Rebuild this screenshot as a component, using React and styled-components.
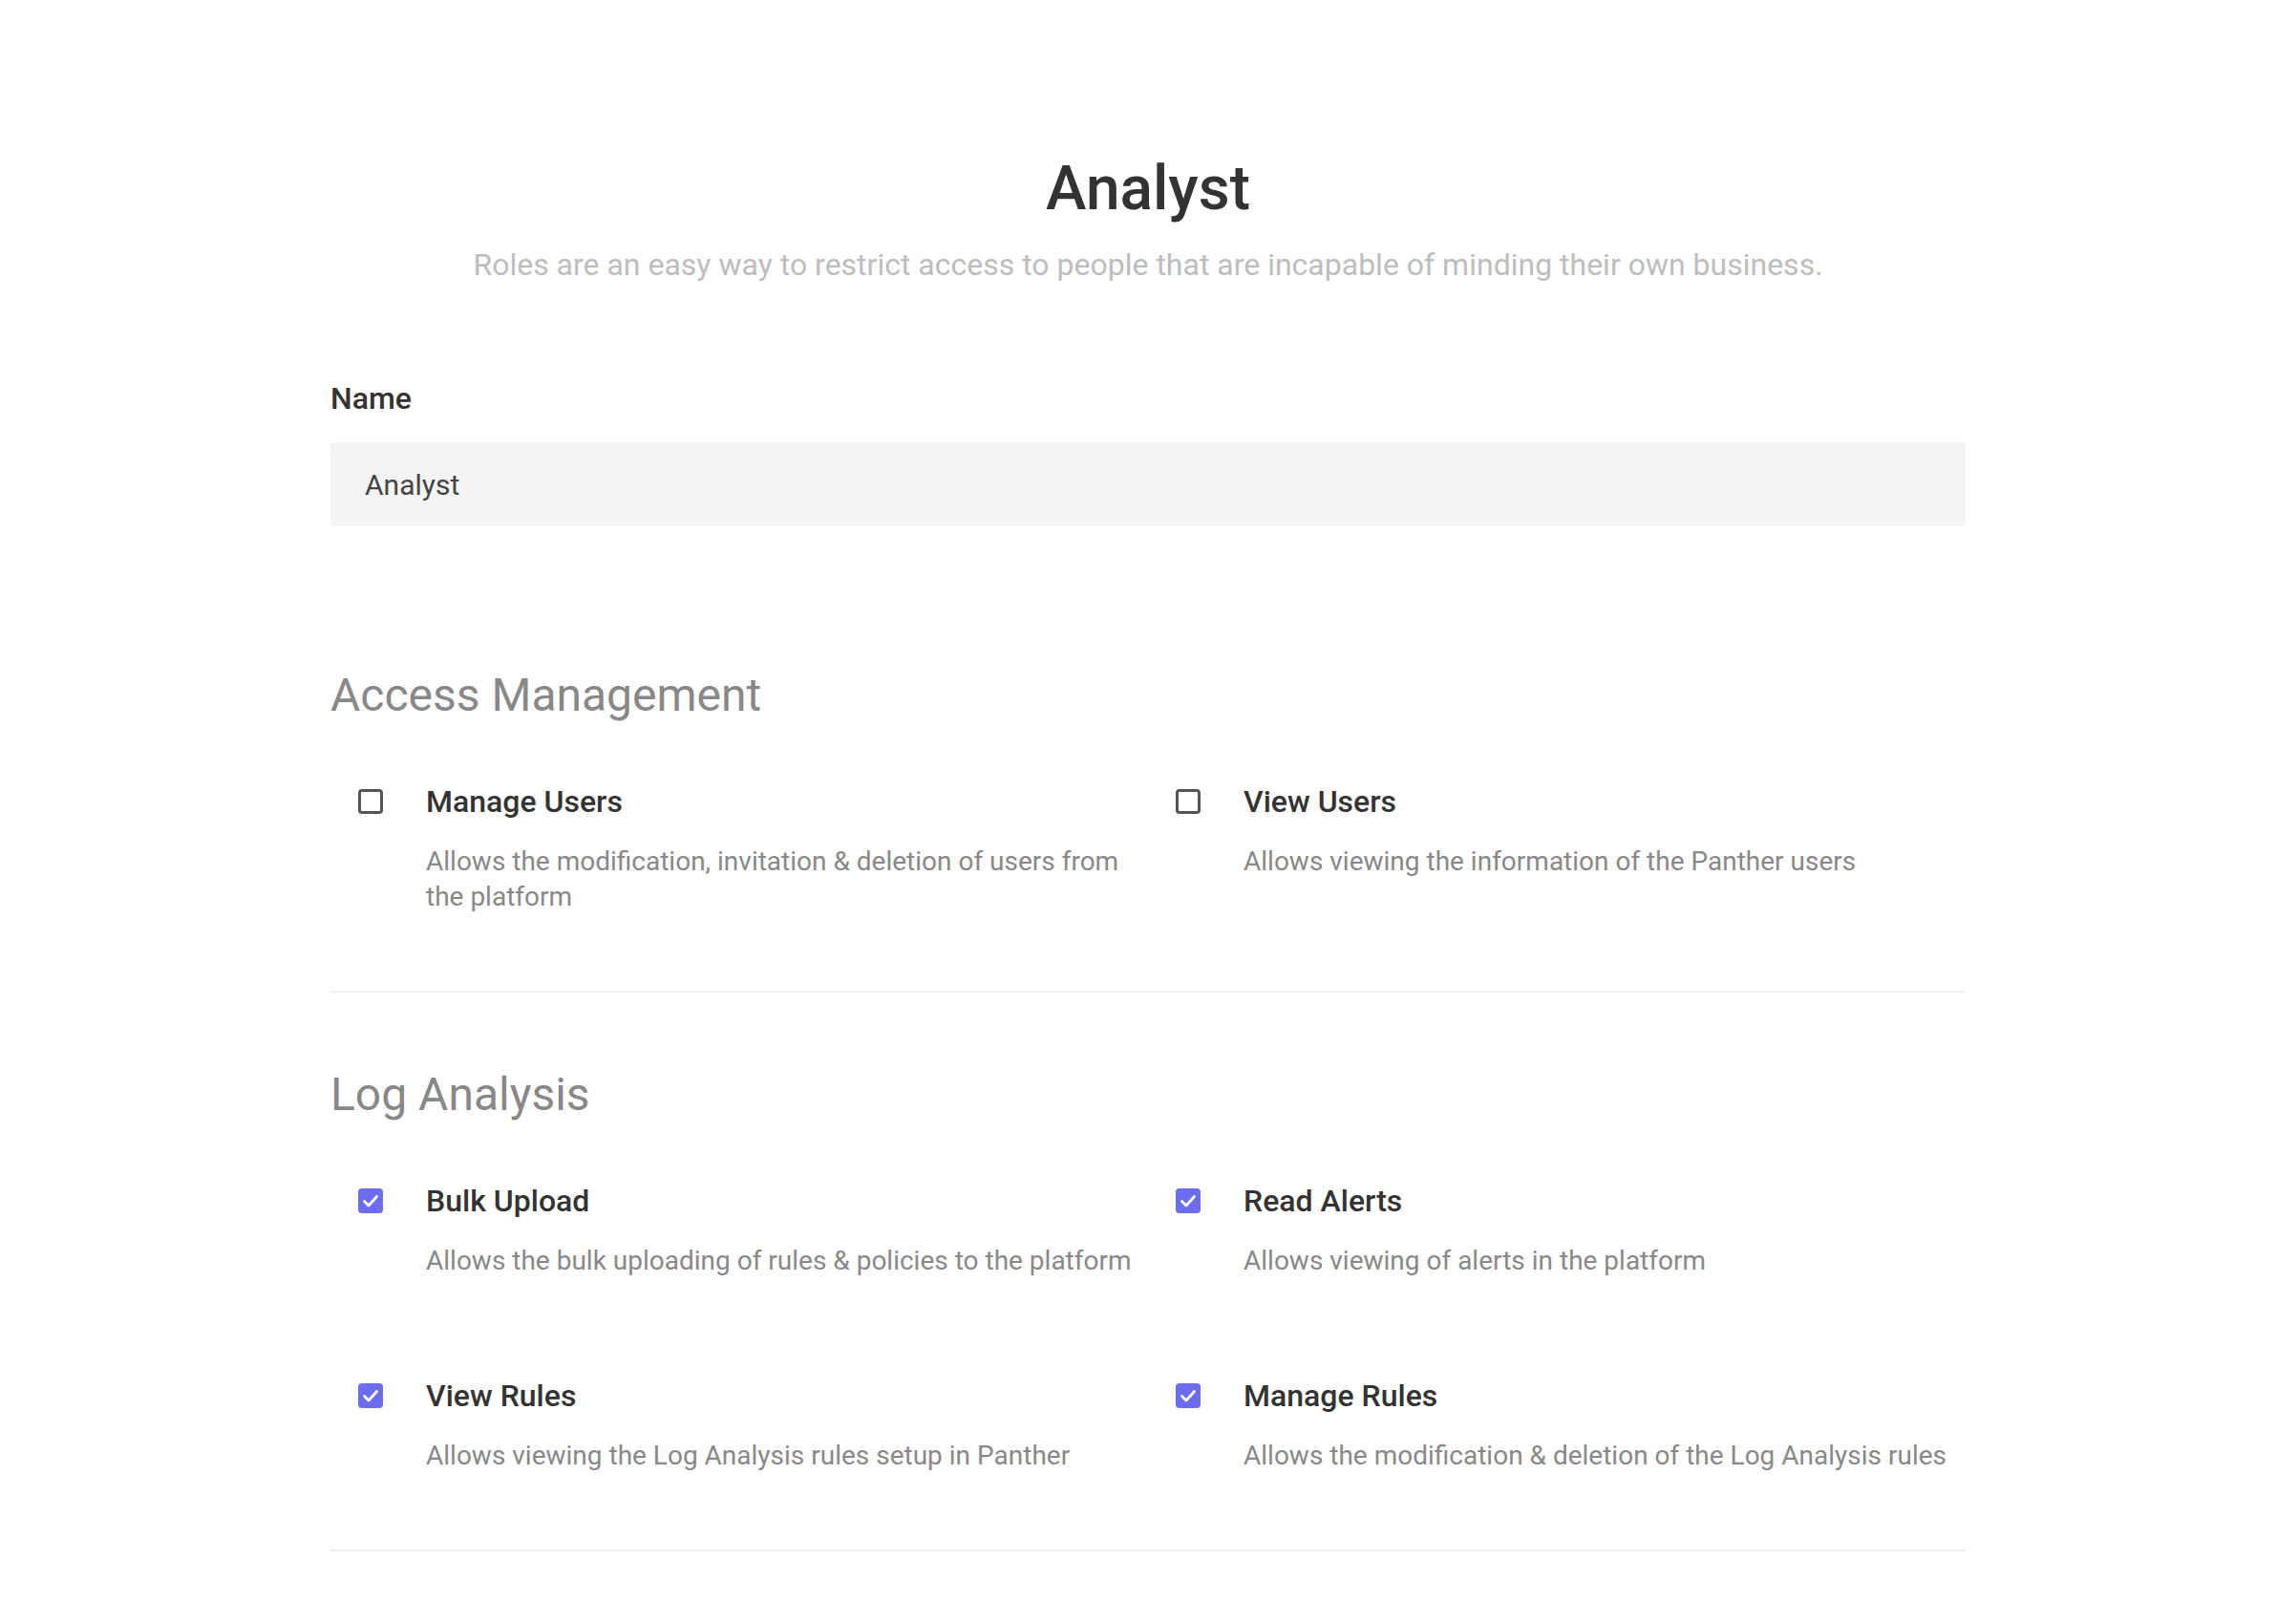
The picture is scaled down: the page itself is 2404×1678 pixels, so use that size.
import React from "react";
import styled, { createGlobalStyle } from "styled-components";

const GlobalStyle = createGlobalStyle`
  html, body {
    margin: 0;
    padding: 0;
    background: #ffffff;
  }
  body {
    font-family: Roboto, "Liberation Sans", Arial, sans-serif;
    -webkit-font-smoothing: antialiased;
  }
`;

const Page = styled.main`
  width: 1712px;
  margin: 0 auto;
  padding-top: 160px;
  box-sizing: border-box;
`;

const Header = styled.header`
  display: flex;
  flex-direction: column;
  align-items: center;
  gap: 21px;
`;

const Title = styled.h1`
  margin: 0;
  font-size: 64px;
  line-height: 76px;
  font-weight: 500;
  color: #333333;
`;

const Subtitle = styled.p`
  margin: 0;
  font-size: 32px;
  line-height: 40px;
  font-weight: 400;
  color: #bdbdbd;
`;

const Field = styled.div`
  margin-top: 102px;
  display: flex;
  flex-direction: column;
  gap: 28px;
`;

const Label = styled.label`
  font-size: 32px;
  line-height: 36px;
  font-weight: 500;
  color: #333333;
`;

const TextInput = styled.input`
  height: 88px;
  box-sizing: border-box;
  border: none;
  outline: none;
  border-radius: 4px;
  background: #f4f4f4;
  padding: 0 36px;
  font-family: Roboto, "Liberation Sans", Arial, sans-serif;
  font-size: 30px;
  color: #444444;
`;

const Section = styled.section`
  padding-top: ${(p) => (p.$first ? "149px" : "79px")};
  padding-bottom: 80px;
  border-bottom: 2px solid #f1f1f1;
`;

const SectionTitle = styled.h2`
  margin: 0 0 63px;
  font-size: 48px;
  line-height: 56px;
  font-weight: 400;
  color: #888888;
`;

const Grid = styled.div`
  display: grid;
  grid-template-columns: 1fr 1fr;
  row-gap: 103px;
`;

const Item = styled.div`
  display: grid;
  grid-template-columns: 26px 1fr;
  column-gap: 45px;
  padding-left: 29px;
`;

const Box = styled.span`
  margin-top: 7px;
  width: 26px;
  height: 26px;
  box-sizing: border-box;
  border-radius: 4px;
  border: ${(p) => (p.$checked ? "none" : "3px solid #555555")};
  background: ${(p) => (p.$checked ? "#6c6cf0" : "#ffffff")};
  display: flex;
  align-items: center;
  justify-content: center;
`;

const Texts = styled.div`
  display: flex;
  flex-direction: column;
  gap: 24px;
`;

const ItemLabel = styled.div`
  font-size: 32px;
  line-height: 40px;
  font-weight: 500;
  color: #333333;
`;

const Description = styled.div`
  font-size: 28px;
  line-height: 37px;
  font-weight: 400;
  color: #888888;
`;

const Check = () => (
  <svg width="26" height="26" viewBox="0 0 26 26" fill="none">
    <path
      d="M6.5 13.5 L11 18 L19.5 8.5"
      stroke="#ffffff"
      strokeWidth="2.8"
      strokeLinecap="round"
      strokeLinejoin="round"
    />
  </svg>
);

const Permission = ({ label, description, checked }) => (
  <Item>
    <Box $checked={checked}>{checked && <Check />}</Box>
    <Texts>
      <ItemLabel>{label}</ItemLabel>
      <Description>{description}</Description>
    </Texts>
  </Item>
);

const sections = [
  {
    title: "Access Management",
    items: [
      {
        label: "Manage Users",
        description:
          "Allows the modification, invitation & deletion of users from the platform",
        checked: false,
      },
      {
        label: "View Users",
        description: "Allows viewing the information of the Panther users",
        checked: false,
      },
    ],
  },
  {
    title: "Log Analysis",
    items: [
      {
        label: "Bulk Upload",
        description:
          "Allows the bulk uploading of rules & policies to the platform",
        checked: true,
      },
      {
        label: "Read Alerts",
        description: "Allows viewing of alerts in the platform",
        checked: true,
      },
      {
        label: "View Rules",
        description: "Allows viewing the Log Analysis rules setup in Panther",
        checked: true,
      },
      {
        label: "Manage Rules",
        description:
          "Allows the modification & deletion of the Log Analysis rules",
        checked: true,
      },
    ],
  },
];

export default function App() {
  return (
    <>
      <GlobalStyle />
      <Page>
        <Header>
          <Title>Analyst</Title>
          <Subtitle>
            Roles are an easy way to restrict access to people that are
            incapable of minding their own business.
          </Subtitle>
        </Header>
        <Field>
          <Label htmlFor="role-name">Name</Label>
          <TextInput id="role-name" defaultValue="Analyst" readOnly />
        </Field>
        {sections.map((s, i) => (
          <Section key={s.title} $first={i === 0}>
            <SectionTitle>{s.title}</SectionTitle>
            <Grid>
              {s.items.map((it) => (
                <Permission key={it.label} {...it} />
              ))}
            </Grid>
          </Section>
        ))}
      </Page>
    </>
  );
}
